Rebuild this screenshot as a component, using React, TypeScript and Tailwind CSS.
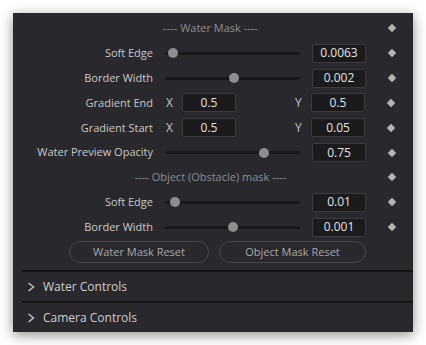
import React, { FC } from "react";

const font = { fontFamily: '"Open Sans", "Noto Sans", sans-serif' };

const Diamond: FC = () => (
  <div className="w-[8px] h-[8px] flex items-center justify-center">
    <div className="w-[6px] h-[6px] rotate-45 bg-[#b4b4b4]" />
  </div>
);

const ValueBox: FC<{ value: string }> = ({ value }) => (
  <div className="w-[54px] h-[19px] rounded-[2px] bg-[#1b1b1d] border border-[#3c3c40] flex items-center justify-center text-[12px] text-[#e2e2e2] leading-none">
    {value}
  </div>
);

const Slider: FC<{ pos: number }> = ({ pos }) => (
  <div className="relative w-[135px] h-[10px] flex items-center">
    <div className="w-full h-[3px] rounded-full bg-[#19191b]" />
    <div
      className="absolute top-[0px] w-[10px] h-[10px] rounded-full bg-[#8e8e90]"
      style={{ left: pos - 5 }}
    />
  </div>
);

const Label: FC<{ text: string }> = ({ text }) => (
  <div className="w-[140px] text-right text-[11px] text-[#cacaca] whitespace-nowrap">{text}</div>
);

const SliderRow: FC<{ label: string; pos: number; value: string }> = ({ label, pos, value }) => (
  <div className="flex items-center h-[25px]">
    <Label text={label} />
    <div className="ml-[12px]">
      <Slider pos={pos} />
    </div>
    <div className="ml-[12px]">
      <ValueBox value={value} />
    </div>
    <div className="ml-[22px]">
      <Diamond />
    </div>
  </div>
);

const XYRow: FC<{ label: string; x: string; y: string }> = ({ label, x, y }) => (
  <div className="flex items-center h-[25px]">
    <Label text={label} />
    <div className="ml-[13px] w-[16px] text-[12px] text-[#c6c6c6]">X</div>
    <ValueBox value={x} />
    <div className="ml-[59px] w-[16px] text-[12px] text-[#c6c6c6]">Y</div>
    <ValueBox value={y} />
    <div className="ml-[22px]">
      <Diamond />
    </div>
  </div>
);

const Header: FC<{ text: string }> = ({ text }) => (
  <div className="flex items-center h-[25px]">
    <div className="w-[353px] text-center text-[11px] text-[#8e8e8e] whitespace-nowrap pl-[42px]">{text}</div>
    <div className="ml-[22px]">
      <Diamond />
    </div>
  </div>
);

const Section: FC<{ title: string }> = ({ title }) => (
  <div className="ml-[9px] border-t-2 border-[#141416] h-[31px] flex items-center">
    <svg width="9" height="10" viewBox="0 0 9 10" className="ml-[5px]">
      <path d="M1.5 1 L6.5 5 L1.5 9" fill="none" stroke="#c8c8c8" strokeWidth="1.4" />
    </svg>
    <span className="ml-[7px] text-[12px] text-[#cfcfcf]">{title}</span>
  </div>
);

export default function App() {
  return (
    <div className="w-[426px] h-[345px] bg-white pt-[13px] pl-[13px]" style={font}>
      <div className="w-[400px] h-[319px] bg-[#28282d] shadow-[0_3px_12px_rgba(0,0,0,0.45)] pt-[3px] flex flex-col">
        <Header text="---- Water Mask ----" />
        <SliderRow label="Soft Edge" pos={8} value="0.0063" />
        <SliderRow label="Border Width" pos={69} value="0.002" />
        <XYRow label="Gradient End" x="0.5" y="0.5" />
        <XYRow label="Gradient Start" x="0.5" y="0.05" />
        <SliderRow label="Water Preview Opacity" pos={99} value="0.75" />
        <Header text="---- Object (Obstacle) mask ----" />
        <SliderRow label="Soft Edge" pos={10} value="0.01" />
        <SliderRow label="Border Width" pos={68} value="0.001" />
        <div className="flex items-center h-[25px] pl-[56px] gap-[10px]">
          <button className="w-[140px] h-[22px] rounded-full border border-[#48484c] text-[11px] text-[#a8a8a8]">
            Water Mask Reset
          </button>
          <button className="w-[147px] h-[22px] rounded-full border border-[#48484c] text-[11px] text-[#a8a8a8]">
            Object Mask Reset
          </button>
        </div>
        <div className="h-[6px]" />
        <Section title="Water Controls" />
        <Section title="Camera Controls" />
      </div>
    </div>
  );
}
